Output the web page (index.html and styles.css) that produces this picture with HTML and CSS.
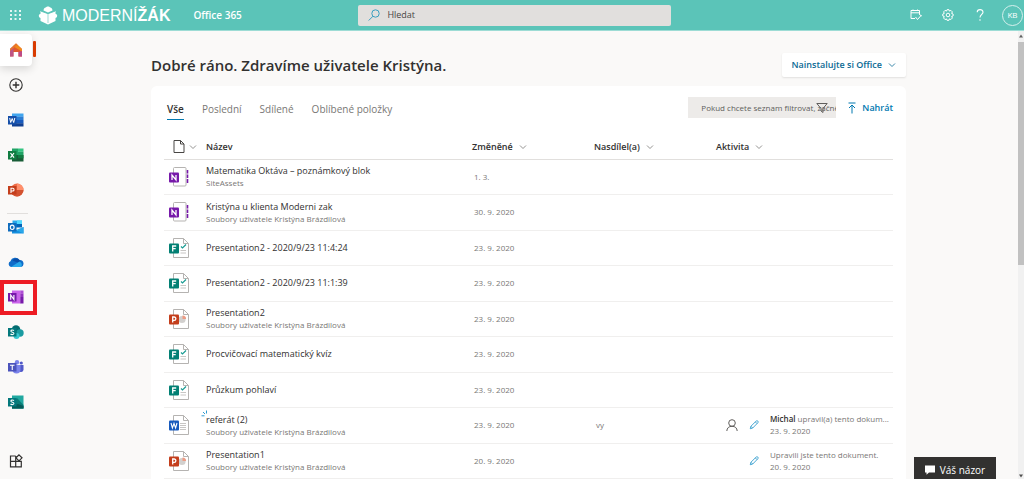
FILE: index.html
```html
<!DOCTYPE html>
<html lang="cs">
<head>
<meta charset="utf-8">
<title>Office 365</title>
<link rel="stylesheet" href="styles.css">
</head>
<body>
<svg class="defs" aria-hidden="true">
  <symbol id="chev" viewBox="0 0 8 8"><path d="M1 2.500l3 3 3-3" fill="none" stroke="currentColor" stroke-width=".8"/></symbol>
  <symbol id="pencil" viewBox="0 0 12 12"><path d="M1.500 10.500l.8-3L8.600 1.300a1.400 1.400 0 0 1 2 2L4.400 9.700zM7.600 2.300l2 2M2.300 7.500l2.100 2.100" fill="none" stroke="#3aa0cf" stroke-width="1.100"/></symbol>
  <symbol id="sheet" viewBox="0 0 20 20"><path d="M4.500 .5h10l5 5v14h-15z" fill="#fff" stroke="#b5b3b1"/><path d="M14.500 .5v5h5" fill="none" stroke="#b5b3b1"/></symbol>
  <symbol id="f-note" viewBox="0 0 20 20"><rect x="4.500" y=".5" width="12.500" height="18.500" rx="1" fill="#fff" stroke="#b5b3b1"/><path d="M18.500 3v3.500M18.500 7.500v3.500M18.500 12v4" stroke="#7719aa" stroke-width="1.600"/><rect y="5.500" width="10" height="10" rx="1" fill="#7719aa"/><path d="M3 13V8l4 5V8" fill="none" stroke="#fff" stroke-width="1.300"/></symbol>
  <symbol id="f-form" viewBox="0 0 20 20"><use href="#sheet"/><path d="M12 8.500l1.500 1.500L17 6.500" fill="none" stroke="#1a9c93" stroke-width="1.200"/><path d="M11.500 12.500h5.500M11.500 15h5.500" stroke="#c8c6c4"/><rect y="5.500" width="10" height="10" rx="1" fill="#038074"/><path d="M3.700 13.500V8h3.500M3.700 10.700h3" fill="none" stroke="#fff" stroke-width="1.300"/></symbol>
  <symbol id="f-ppt" viewBox="0 0 20 20"><use href="#sheet"/><circle cx="13" cy="10.500" r="3.600" fill="#d2d0ce"/><path d="M13.500 10V6.400A3.600 3.600 0 0 1 17.100 10z" fill="#ed9b84"/><rect y="5.500" width="10" height="10" rx="1" fill="#c43e1c"/><path d="M3.700 13.500V8h1.500a1.600 1.600 0 0 1 0 3.300H3.700" fill="none" stroke="#fff" stroke-width="1.300"/></symbol>
  <symbol id="f-word" viewBox="0 0 20 20"><use href="#sheet"/><path d="M11 8.500h6M11 10.500h6M11 12.500h6M11 14.500h6" stroke="#c8c6c4"/><rect y="5.500" width="10" height="10" rx="1" fill="#185abd"/><path d="M2 8l1.400 5L5 8.500 6.600 13 8 8" fill="none" stroke="#fff" stroke-width="1.100"/></symbol>
</svg>

<header class="topbar">
  <button class="tbtn waffle" aria-label="Spouštěč aplikací">
    <svg width="12" height="12" viewBox="0 0 12 12" fill="#e6f6f4"><path d="M0 1h2v2H0zM4.500 1h2v2h-2zM9 1h2v2H9zM0 5h2v2H0zM4.500 5h2v2h-2zM9 5h2v2H9zM0 9h2v2H0zM4.500 9h2v2h-2zM9 9h2v2H9z"/></svg>
  </button>
  <a class="logo" href="#">
    <svg width="20" height="19" viewBox="0 0 20 19" fill="#fff"><path d="M5.500 4.500C5.500 2 7.500 1.500 8 1.500 8.500.2 11.500.2 12 1.500c.5 0 2.500.5 2.500 3L10 6.500z"/><path d="M2.500 5L10 7.800 17.500 5v2.700a2.200 2.200 0 0 1 0 4.300v3L10 18.500 2.500 15v-3a2.200 2.200 0 0 1 0-4.300z"/><path d="M10 7.800V17" fill="none" stroke="#5bc4b8" stroke-width=".6"/><path d="M3 5.100l7 2.600 7-2.600" fill="none" stroke="#5bc4b8" stroke-width=".9"/></svg>
    <span>MODERNÍ<b>ŽÁK</b></span>
  </a>
  <a class="suite" href="#">Office 365</a>
  <label class="search">
    <svg width="12" height="12" viewBox="0 0 12 12" fill="none" stroke="#3a9fc0"><circle cx="7.500" cy="4.500" r="3.700"/><path d="M5 7.200L.7 11.500"/></svg>
    <input type="text" placeholder="Hledat" aria-label="Hledat">
  </label>
  <div class="tools">
    <button class="tbtn" aria-label="Novinky"><svg width="12" height="12" viewBox="0 0 12 12" fill="none" stroke="#fff"><path d="M5 9.500H1V1.500h8.500V5M1 3.800h8.500M3 .5v1.500M7.500 .5v1.500M5.500 8l2 2.500 4-4.500M9 5l2.500 2"/></svg></button>
    <button class="tbtn" aria-label="Nastavení"><svg width="12" height="12" viewBox="0 0 12 12" fill="none" stroke="#fff"><circle cx="6" cy="6" r="1.800"/><path d="M5 .7h2l.4 1.400 1.500-.7 1.500 1.500-.8 1.500 1.500.6v2l-1.500.5.800 1.500-1.500 1.500L7.400 9.900 7 11.300H5l-.5-1.400-1.500.7L1.600 9l.7-1.500L.8 7V5l1.500-.6-.7-1.500L3 1.400l1.500.7z"/></svg></button>
    <button class="tbtn" aria-label="Nápověda"><svg width="12" height="12" viewBox="0 0 12 12" fill="none" stroke="#fff" stroke-width="1.100"><path d="M3.200 3.200C3.200-.2 9-.2 9 3.200 9 5.300 6 5.500 6 8.500M6 10.300v1.400"/></svg></button>
    <button class="avatar">KB</button>
  </div>
</header>

<div class="shell">
  <nav class="rail" aria-label="Aplikace">
    <button class="app home" aria-label="Domů"><svg width="14" height="14" viewBox="0 0 14 14"><path d="M1 6l6-5.500L13 6v7.500H9.500V9h-5v4.500H1z" fill="#e0592f"/><path d="M1 6l3.500-3v10.500H1z" fill="#b5529b" opacity=".8"/><path d="M4 3.200L7 .5 13 6v2.500z" fill="#f08a1d"/><path d="M1 6l6-5.500 1.500 1.300L1 8z" fill="#e8762c"/><path d="M9.500 9L13 8v5.500H9.500z" fill="#bd4b87"/></svg></button>
    <button class="app" aria-label="Vytvořit"><svg width="14" height="14" viewBox="0 0 14 14" fill="none" stroke="#323130" stroke-width="1.100"><circle cx="7" cy="7" r="6.200"/><path d="M7 3.700v6.600M3.700 7h6.600" stroke-width="1.400"/></svg></button>
    <button class="app" aria-label="Word"><svg width="16" height="14" viewBox="0 0 16 14"><path d="M4 .5h11.500v3.300H4z" fill="#41a5ee"/><path d="M4 3.700h11.500V7H4z" fill="#2b7cd3"/><path d="M4 7h11.500v3.300H4z" fill="#185abd"/><path d="M4 10.200h11.500v3.300H4z" fill="#103f91"/><path d="M0 3h8.500v8.500H0z" fill="#164fa8"/><path d="M1.700 5l1 4.500L4.200 5.500 5.700 9.500l1.100-4.500" fill="none" stroke="#fff"/></svg></button>
    <button class="app" aria-label="Excel"><svg width="16" height="14" viewBox="0 0 16 14"><path d="M4 .5h6V7H4z" fill="#21a366"/><path d="M10 .5h5.500v3.300H10z" fill="#33c481"/><path d="M10 3.800h5.500V7H10z" fill="#21a366"/><path d="M4 7h11.500v6.500H4z" fill="#185c37"/><path d="M10 7h5.500v3.300H10z" fill="#107c41"/><path d="M0 3h8.500v8.500H0z" fill="#107c41"/><path d="M2.500 5L6 9.700M6 5L2.500 9.700" stroke="#fff" stroke-width="1.200"/></svg></button>
    <button class="app" aria-label="PowerPoint"><svg width="16" height="14" viewBox="0 0 16 14"><circle cx="9" cy="7" r="6.500" fill="#ed6c47"/><path d="M9 .5A6.500 6.500 0 0 1 15.500 7H9z" fill="#ff8f6b"/><path d="M2.500 7h13a6.500 6.500 0 0 1-13 0z" fill="#d35230"/><path d="M0 3h8.500v8.500H0z" fill="#c43e1c"/><path d="M3 10V5.300h1.700a1.300 1.300 0 0 1 0 2.700H3" fill="none" stroke="#fff" stroke-width="1.100"/></svg></button>
    <hr>
    <button class="app" aria-label="Outlook"><svg width="16" height="14" viewBox="0 0 16 14"><path d="M4.500 .5H14V7H4.500z" fill="#28a8ea"/><path d="M9 .5h5v3.500H9z" fill="#50d9ff"/><path d="M9 4h5v3.500H9z" fill="#0364b8"/><path d="M4.500 4H9v3.500H4.500z" fill="#0078d4"/><path d="M4 7.500l5.500 3L15.500 7v6.500H4z" fill="#1490df"/><path d="M15.500 7v6.500L8 10z" fill="#28a8ea"/><path d="M0 3h8.500v8.500H0z" fill="#0f6cbd"/><ellipse cx="4.200" cy="7.300" rx="1.900" ry="2.200" fill="none" stroke="#fff" stroke-width="1.100"/></svg></button>
    <button class="app" aria-label="OneDrive"><svg width="16" height="14" viewBox="0 0 16 14"><path d="M3 12a3 3 0 0 1-.5-5.700A5 5 0 0 1 11.500 5a3.600 3.600 0 0 1 1.500 7z" fill="#0f6cc9"/><path d="M4.500 5.500A4.500 4.500 0 0 1 11.500 5L13 9z" fill="#0a4fa8"/><path d="M3 12l8.500-5.500A3.500 3.500 0 0 1 13 12z" fill="#28a8ea"/></svg></button>
    <button class="app marked" aria-label="OneNote"><svg width="16" height="14" viewBox="0 0 16 14"><path d="M4 .5h8.500v13H4z" fill="#ca64ea"/><path d="M12.300 .5h3.200v3.300h-3.200z" fill="#ae4bd5"/><path d="M12.300 3.700h3.200V7h-3.200z" fill="#9332bf"/><path d="M12.300 7h3.200v6.500h-3.200z" fill="#7719aa"/><path d="M0 3h8.500v8.500H0z" fill="#7719aa"/><path d="M2.700 9.800V5l3.200 4.500V5" fill="none" stroke="#fff" stroke-width="1.100"/></svg></button>
    <button class="app" aria-label="SharePoint"><svg width="16" height="14" viewBox="0 0 16 14"><circle cx="8" cy="4.500" r="4.300" fill="#036c70"/><circle cx="12" cy="8" r="3.700" fill="#1a9ba1"/><circle cx="8.500" cy="11" r="3" fill="#37c6d0"/><path d="M0 3h8.500v8.500H0z" fill="#03787c"/><path d="M6 5.500C4.500 4.700 2.800 5 2.900 6.200S6 7.200 5.900 8.500 3.600 9.900 2.500 9" fill="none" stroke="#fff" stroke-width="1.100"/></svg></button>
    <button class="app" aria-label="Teams"><svg width="16" height="14" viewBox="0 0 16 14"><circle cx="13.300" cy="3" r="1.600" fill="#5059c9"/><circle cx="9" cy="2.300" r="2.200" fill="#7b83eb"/><path d="M10.500 5H15.500v4.500a2.600 2.600 0 0 1-5 1z" fill="#5059c9"/><path d="M4.500 5h8v4.500a4 4 0 0 1-8 0z" fill="#7b83eb"/><path d="M0 3h8.500v8.500H0z" fill="#4b53bc"/><path d="M2 5.300h4.500M4.250 5.300V10" stroke="#fff" stroke-width="1.100"/></svg></button>
    <button class="app" aria-label="Sway"><svg width="16" height="14" viewBox="0 0 16 14"><path d="M4 .5h11.500v13H4z" fill="#21a8a0"/><path d="M4 8l5-5 6.500 7v3.500H4z" fill="#0a7c78"/><path d="M4 11l6-2 5.500 2v2.500H4z" fill="#055b58"/><path d="M0 3h8.500v8.500H0z" fill="#03787c"/><path d="M6 5.500C4.500 4.700 2.800 5 2.900 6.200S6 7.200 5.900 8.500 3.600 9.900 2.500 9" fill="none" stroke="#fff" stroke-width="1.100"/></svg></button>
    <button class="app all" aria-label="Všechny aplikace"><svg width="14" height="14" viewBox="0 0 14 14" fill="none" stroke="#323130" stroke-width="1.200"><path d="M6.700 2H1.500v10.800h10.800V7.400H1.500M6.700 2v10.800M10 .8l3 3-3 3-3-3z"/></svg></button>
  </nav>

  <main class="main">
    <div class="inner">
      <div class="greet">
        <h1>Dobré ráno. Zdravíme uživatele Kristýna.</h1>
        <button class="install">Nainstalujte si Office <svg width="8" height="8"><use href="#chev"/></svg></button>
      </div>
      <section class="card">
        <div class="cardbar">
          <div class="tabs" role="tablist">
            <button class="tab on" role="tab" aria-selected="true">Vše</button>
            <button class="tab" role="tab">Poslední</button>
            <button class="tab" role="tab">Sdílené</button>
            <button class="tab" role="tab">Oblíbené položky</button>
          </div>
          <label class="filter">
            <input type="text" placeholder="Pokud chcete seznam filtrovat, začně" aria-label="Filtr">
            <svg width="12" height="12" viewBox="0 0 12 12" fill="none" stroke="#605e5c"><path d="M.8 1.500h10.400L7 6.500v4l-2-1.500V6.500z"/></svg>
          </label>
          <button class="upload"><svg width="8" height="12" viewBox="0 0 8 12" fill="none" stroke="#0078b0"><path d="M.5 1h7M4 3v8.500M1 6l3-3 3 3"/></svg>Nahrát</button>
        </div>
        <table class="files">
          <colgroup><col class="c-icon"><col><col class="c-mid"><col class="c-mid"><col class="c-act"></colgroup>
          <thead>
            <tr>
              <th><span class="th type"><svg width="12" height="13" viewBox="0 0 12 13" fill="none" stroke="#484644"><path d="M1 .5h6.500L11 4v8.500H1zM7.500 .5V4H11"/></svg><svg class="cv" width="8" height="8"><use href="#chev"/></svg></span></th>
              <th>Název</th>
              <th><span class="th">Změněné <svg class="cv" width="8" height="8"><use href="#chev"/></svg></span></th>
              <th><span class="th">Nasdílel(a) <svg class="cv" width="8" height="8"><use href="#chev"/></svg></span></th>
              <th><span class="th">Aktivita <svg class="cv" width="8" height="8"><use href="#chev"/></svg></span></th>
            </tr>
          </thead>
          <tbody>
            <tr><td class="ic"><svg width="20" height="20"><use href="#f-note"/></svg></td><td><a href="#">Matematika Oktáva – poznámkový blok</a><small>SiteAssets</small></td><td class="meta">1. 3.</td><td></td><td></td></tr>
            <tr><td class="ic"><svg width="20" height="20"><use href="#f-note"/></svg></td><td><a href="#">Kristýna u klienta Moderni zak</a><small>Soubory uživatele Kristýna Brázdilová</small></td><td class="meta">30. 9. 2020</td><td></td><td></td></tr>
            <tr><td class="ic"><svg width="20" height="20"><use href="#f-form"/></svg></td><td><a href="#">Presentation2 - 2020/9/23 11:4:24</a></td><td class="meta">23. 9. 2020</td><td></td><td></td></tr>
            <tr><td class="ic"><svg width="20" height="20"><use href="#f-form"/></svg></td><td><a href="#">Presentation2 - 2020/9/23 11:1:39</a></td><td class="meta">23. 9. 2020</td><td></td><td></td></tr>
            <tr><td class="ic"><svg width="20" height="20"><use href="#f-ppt"/></svg></td><td><a href="#">Presentation2</a><small>Soubory uživatele Kristýna Brázdilová</small></td><td class="meta">23. 9. 2020</td><td></td><td></td></tr>
            <tr><td class="ic"><svg width="20" height="20"><use href="#f-form"/></svg></td><td><a href="#">Procvičovací matematický kvíz</a></td><td class="meta">23. 9. 2020</td><td></td><td></td></tr>
            <tr><td class="ic"><svg width="20" height="20"><use href="#f-form"/></svg></td><td><a href="#">Průzkum pohlaví</a></td><td class="meta">23. 9. 2020</td><td></td><td></td></tr>
            <tr><td class="ic"><svg width="20" height="20"><use href="#f-word"/></svg></td><td><a class="fresh" href="#"><svg width="7" height="7" viewBox="0 0 7 7" fill="none" stroke="#2e9bd0"><path d="M.5 5.800h3M2 2l2 2M5.500 .5v3"/></svg>referát (2)</a><small>Soubory uživatele Kristýna Brázdilová</small></td><td class="meta">23. 9. 2020</td><td class="meta by">vy</td><td><div class="act"><svg width="12" height="12" viewBox="0 0 12 12" fill="none" stroke="#605e5c"><circle cx="6" cy="4" r="3.300"/><path d="M.8 12c.2-3 2-4.700 5.200-4.700S11 9 11.200 12"/></svg><svg width="10" height="10"><use href="#pencil"/></svg><div class="what"><p><b>Michal</b> upravil(a) tento dokum...</p><p>23. 9. 2020</p></div></div></td></tr>
            <tr><td class="ic"><svg width="20" height="20"><use href="#f-ppt"/></svg></td><td><a href="#">Presentation1</a><small>Soubory uživatele Kristýna Brázdilová</small></td><td class="meta">20. 9. 2020</td><td></td><td><div class="act"><span class="who"></span><svg width="10" height="10"><use href="#pencil"/></svg><div class="what"><p>Upravili jste tento dokument.</p><p>20. 9. 2020</p></div></div></td></tr>
          </tbody>
        </table>
      </section>
    </div>
  </main>

  <div class="scroll" aria-hidden="true">
    <svg width="6" height="6" viewBox="0 0 6 6"><path d="M1 4.500l2-3 2 3z" fill="#606060"/></svg>
    <div class="thumb"></div>
    <svg width="6" height="6" viewBox="0 0 6 6"><path d="M1 1.500l2 3 2-3z" fill="#505050"/></svg>
  </div>
</div>

<button class="feedback"><svg width="10" height="10" viewBox="0 0 10 10"><path d="M0 .5h10v7H4L1.500 9.800V7.500H0z" fill="#fff"/></svg>Váš názor</button>
</body>
</html>
```

FILE: styles.css
```css
* { box-sizing: border-box; }
body {
  margin: 0;
  height: 100vh;
  display: flex;
  flex-direction: column;
  overflow: hidden;
  background: #faf9f8;
  color: #323130;
  font: 9px/12px "Open Sans", "Noto Sans", sans-serif;
}
button { border: 0; padding: 0; background: none; font: inherit; color: inherit; }
a { color: inherit; text-decoration: none; }
svg { flex: none; display: block; }
.defs { position: absolute; width: 0; height: 0; }

.topbar {
  flex: none;
  height: 31px;
  display: flex;
  align-items: center;
  background: #5bc4b8;
  border-bottom: 1px solid #9ddcd5;
  color: #fff;
}
.waffle { width: 32px; }
.tbtn { height: 30px; display: flex; align-items: center; justify-content: center; }
.logo { display: flex; align-items: center; gap: 4px; margin-left: 6px; font: 16px/20px "Liberation Sans", Arial, sans-serif; }
.logo span { padding-top: 2px; }
.suite { margin-left: 23px; font-size: 10px; font-weight: 600; }
.search {
  position: absolute;
  left: 35%;
  width: 313px;
  height: 21px;
  padding: 0 10px;
  display: flex;
  align-items: center;
  gap: 7px;
  border-radius: 2px;
  background: #e1dfdd;
  font-size: 9px;
}
.search input, .filter input { flex: 1; min-width: 0; border: 0; padding: 0; background: none; font: inherit; color: #484644; outline: 0; }
.search input::placeholder { color: #484644; opacity: 1; }
.tools { margin-left: auto; display: flex; align-items: center; }
.tools .tbtn { width: 32px; }
.avatar { width: 21px; height: 21px; margin: 0 1px 0 6px; border: 1px solid #d6f0ed; border-radius: 50%; font-size: 8px; }

.shell { flex: 1; min-height: 0; display: flex; }
.rail { width: 39px; flex: none; display: flex; flex-direction: column; align-items: flex-start; gap: 11px; padding: 3px 0 6px; }
.app { flex: none; width: 31px; height: 24px; display: flex; align-items: center; justify-content: center; position: relative; }
.home { width: 32px; height: 32px; margin-bottom: -4px; border-radius: 0 4px 4px 0; background: #fff; box-shadow: 0 3px 8px rgba(0, 0, 0, .14); }
.home::after { content: ""; position: absolute; left: 33px; top: 7px; width: 3px; height: 16px; border-radius: 1px; background: #d83b01; }
.rail hr { width: 21px; height: 1px; margin: 0 0 -10px 7px; border: 0; background: #e1dfdd; }
.marked::after { content: ""; position: absolute; inset: -5px -6px -6px 0; border: 4px solid #ed1c24; }
.all { margin-top: auto; }

.main { flex: 1; min-width: 0; display: flex; justify-content: center; }
.inner { flex: 0 1 755px; min-width: 0; display: flex; flex-direction: column; }
.greet { flex: none; height: 55px; padding-top: 12px; display: flex; align-items: center; justify-content: space-between; }
h1 { margin: 0; font-size: 15px; line-height: 20px; font-weight: 600; }
.install { height: 24px; padding: 0 10px; display: flex; align-items: center; gap: 6px; border-radius: 2px; background: #fff; color: #0b6a94; font-weight: 600; box-shadow: 0 1px 2px rgba(0, 0, 0, .1); }
.card { flex: none; padding: 11px 13px 12px; border-radius: 6px 6px 0 0; background: #fff; }
.cardbar { height: 38px; display: flex; align-items: flex-start; }
.tabs { display: flex; gap: 18px; margin: 0 auto 0 3px; }
.tab { height: 23px; padding-top: 1px; border-bottom: 1px solid transparent; font-size: 10px; color: #797775; }
.tab.on { color: #323130; font-weight: 600; border-color: #0078b0; }
.filter { position: relative; width: 148px; height: 21px; display: flex; align-items: center; padding-left: 13px; background: #edebe9; font-size: 8px; }
.filter input::placeholder { color: #605e5c; opacity: 1; }
.filter svg { position: absolute; right: 8px; }
.upload { height: 21px; margin-left: 12px; display: flex; align-items: center; gap: 6px; color: #0078b0; font-weight: 600; }

.files { width: 100%; height: 344px; table-layout: fixed; border-collapse: collapse; }
.c-icon { width: 42px; }
.c-mid { width: 122px; }
.c-act { width: 177px; }
th { height: 24px; padding: 0; text-align: left; font-weight: 600; border-bottom: 1px solid #e1dfdd; }
td { height: 35px; padding: 0; border-bottom: 1px solid #f0efee; vertical-align: middle; }
.th { display: flex; align-items: center; gap: 6px; }
.type { padding-left: 9px; gap: 4px; }
.cv { color: #797775; }
.ic { padding-left: 5px; }
td a { display: block; position: relative; }
td small { display: block; font-size: 8px; line-height: 11px; color: #797775; }
.fresh svg { position: absolute; left: -5px; top: -4px; }
.meta { padding-left: 2px; font-size: 8px; color: #797775; }
.act { display: flex; align-items: center; gap: 11px; padding-left: 10px; font-size: 8px; color: #797775; }
.who { width: 12px; }
.what { flex: 1; min-width: 0; }
.what p { margin: 0; white-space: nowrap; }
.what b { color: #323130; font-weight: 600; }

.scroll { width: 6px; flex: none; display: flex; flex-direction: column; gap: 3px; padding: 2px 0 0; background: #f1f1f1; }
.thumb { height: 50%; margin-bottom: auto; background: #c1c1c1; }

.feedback { position: absolute; right: 28px; bottom: 0; width: 82px; height: 22px; padding-top: 4px; display: flex; align-items: center; justify-content: center; gap: 5px; background: #323130; color: #fff; font-size: 10px; }
```
